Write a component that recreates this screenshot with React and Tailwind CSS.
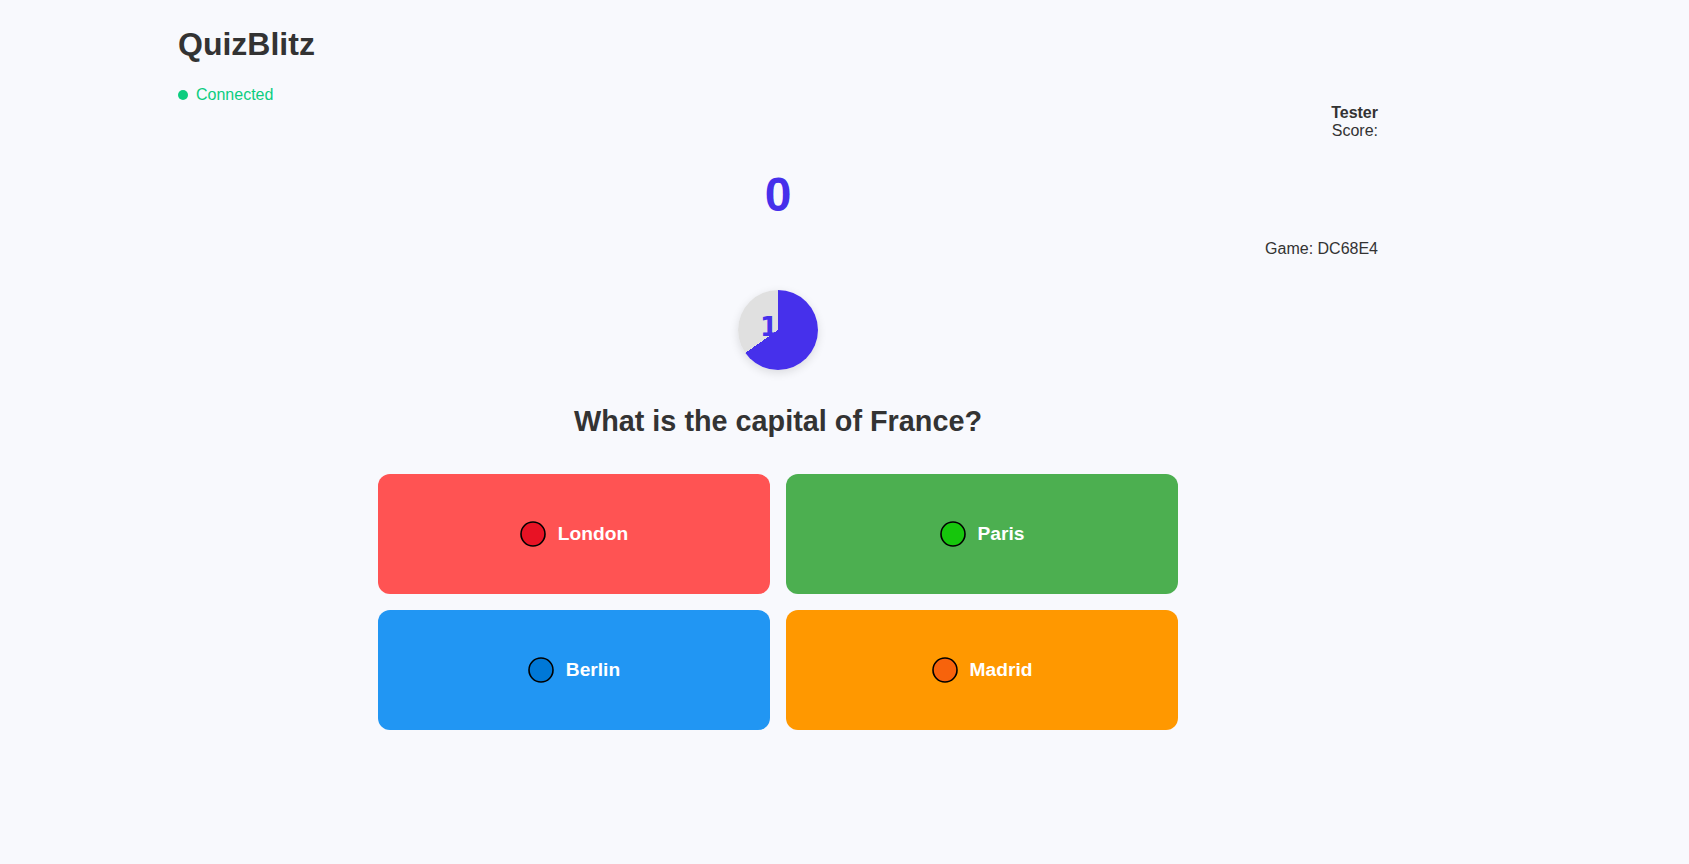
import React from "react";

const answers = [
  { text: "London", bg: "bg-[#ff5353]", dot: "#e81224" },
  { text: "Paris", bg: "bg-[#4caf50]", dot: "#16c60c" },
  { text: "Berlin", bg: "bg-[#2196f3]", dot: "#0078d7" },
  { text: "Madrid", bg: "bg-[#ff9800]", dot: "#f7630c" },
];

function Dot({ color }) {
  return (
    <svg width="26" height="26" viewBox="0 0 26 26" className="shrink-0">
      <circle cx="13" cy="13" r="12" fill={color} stroke="#000" strokeWidth="1.6" />
    </svg>
  );
}

export default function App() {
  const elapsed = 0.653;
  const deg = elapsed * 360;
  return (
    <div className="min-h-screen bg-[#f8f9fd] text-[#333333] font-['Liberation_Sans',Arial,sans-serif]">
      <div className="w-[1200px] ml-[178px] pt-[26px]">
        <h1 className="text-[32px] leading-[37px] font-bold">QuizBlitz</h1>
        <div className="mt-[23px] flex items-center gap-2 text-[16px] leading-[18px] text-[#0ccd80]">
          <span className="w-[10px] h-[10px] rounded-full bg-[#0ccd80]" />
          <span>Connected</span>
        </div>
        <div className="text-right text-[16px] leading-[18px]">
          <div className="font-bold">Tester</div>
          <div>Score:</div>
        </div>
        <div className="mt-[27px] text-center text-[48px] leading-[55px] font-bold text-[#4630eb]">0</div>
        <div className="mt-[18px] text-right text-[16px] leading-[18px]">Game: DC68E4</div>
        <div className="mt-[32px] flex justify-center">
          <div
            className="w-20 h-20 rounded-full flex items-center justify-center shadow-[0_3px_10px_rgba(0,0,0,0.12)]"
            style={{ background: `conic-gradient(#4630eb 0deg ${deg}deg, #e0e0e0 ${deg}deg 360deg)` }}
          >
            <span className="text-[26px] leading-none font-bold text-[#4630eb] font-['DejaVu_Sans',sans-serif] translate-y-[-3px]">10</span>
          </div>
        </div>
        <h2 className="mt-[35px] text-center text-[28.8px] leading-[33px] font-bold">What is the capital of France?</h2>
        <div className="mt-[36px] mx-auto w-[800px] grid grid-cols-2 gap-4">
          {answers.map((a) => (
            <button
              key={a.text}
              className={`${a.bg} h-[120px] rounded-xl flex items-center justify-center gap-3 text-white font-bold text-[19.2px]`}
            >
              <Dot color={a.dot} />
              <span>{a.text}</span>
            </button>
          ))}
        </div>
      </div>
    </div>
  );
}
